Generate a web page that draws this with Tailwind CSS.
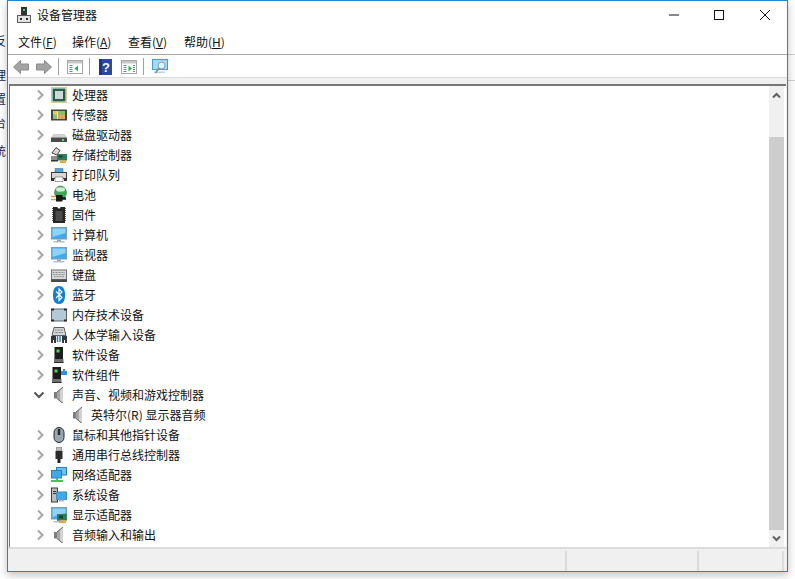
<!DOCTYPE html>
<html lang="zh-CN">
  <head>
    <meta charset="UTF-8" />
    <script src="https://cdn.jsdelivr.net/npm/@tailwindcss/browser@4"></script>
    <title>设备管理器</title>
  </head>
  <body class="bg-white font-['Noto_Sans_CJK_SC','Noto_Sans',sans-serif] text-[12px] text-[#111]">
    <svg class="hidden">
      <symbol id="speaker" viewBox="0 0 16 16">
        <path d="M3 5h3.500v6.500H3z" fill="#7d7d7d" />
        <path d="M6 5 12 0v16.500L6 11.500z" fill="#a6a6a6" />
        <path d="M9 2.500 12 0v16.500L9 14z" fill="#d2d2d2" />
        <path d="M6 5 12 0M6 11.500l6 5" stroke="#666" fill="none" />
      </symbol>
      <symbol id="monitor" viewBox="0 0 16 16">
        <rect x=".5" y=".5" width="15" height="11.500" fill="#3fa9ee" stroke="#7f9db3" />
        <path d="M1.500 1.500h13v4.500L1.500 10z" fill="#8fd3f9" />
        <path d="M6 12.500h4v1.500H6z" fill="#98a6b0" />
        <path d="M2.500 14h11v1.500h-11z" fill="#b3bec6" />
      </symbol>
      <symbol id="tower" viewBox="0 0 16 16">
        <rect x="3.500" y="0" width="8.500" height="12" fill="#1c1c1c" />
        <rect x="5.500" y="2.500" width="3" height="3" fill="#3fe04f" />
        <path d="M3 12h9.500v4H3z" fill="#707070" />
        <path d="M3 15h9.500v1H3z" fill="#2c2c2c" />
      </symbol>
      <symbol id="chevron" viewBox="0 0 10 12">
        <path d="M3 1.500 7.500 6 3 10.500" fill="none" stroke="#a6a6a6" stroke-width="2" />
      </symbol>
      <symbol id="window" viewBox="0 0 16 14">
        <rect x=".5" y=".5" width="15" height="13" fill="#fff" stroke="#a6a6a6" />
        <path d="M1 1h14v2.500H1z" fill="#c6c6c6" />
        <path d="M2.500 5.500h3M2.500 7.500h3M2.500 9.500h3M2.500 11.500h3" stroke="#5d87a8" />
      </symbol>
    </svg>

    <div class="flex w-[795px] h-[579px] overflow-hidden">
      <!-- what shows of the window behind -->
      <div class="relative w-[7px] h-full overflow-hidden text-[#1b2a56]">
        <span class="absolute right-px top-[32px]">反</span>
        <span class="absolute right-px top-[66px]">理</span>
        <span class="absolute right-px top-[90px]">置</span>
        <span class="absolute right-px top-[114px]">台</span>
        <span class="absolute right-px top-[142px]">统</span>
      </div>

      <!-- device manager window -->
      <div class="flex flex-col w-[781px] h-[572px] border border-[#1a86d8] bg-white shadow-[0_3px_8px_rgba(0,0,0,0.25)] z-10">
        <!-- title bar -->
        <div class="flex items-center h-[29px] shrink-0 pb-[2px]">
          <svg class="ml-[9px] w-[14px] h-[16px]" viewBox="0 0 14 16">
            <path d="M4 0h6v8H4z" fill="#333" />
            <path d="M6 2h2v2H6z" fill="#46d35a" />
            <rect x=".5" y="8.500" width="13" height="7" fill="#e2e2e2" stroke="#5c5c5c" />
            <path d="M3 11h2v2H3zM9 11h2v2H9z" fill="#333" />
          </svg>
          <span class="ml-[6px]">设备管理器</span>
          <div class="flex items-center ml-auto">
            <svg class="w-[10px] h-[10px] mr-[35px]" viewBox="0 0 10 10"><path d="M0 5h10" stroke="#111" /></svg>
            <svg class="w-[10px] h-[10px] mr-[36px]" viewBox="0 0 10 10"><rect x=".5" y=".5" width="9" height="9" fill="none" stroke="#111" /></svg>
            <svg class="w-[10px] h-[10px] mr-[17px]" viewBox="0 0 10 10"><path d="M0 0l10 10M10 0 0 10" stroke="#111" /></svg>
          </div>
        </div>

        <!-- menu -->
        <div class="flex items-center h-[25px] shrink-0 border-b border-[#a9a9a9] pl-[10px]">
          <span class="w-[54px]">文件(<span class="underline">F</span>)</span>
          <span class="w-[56px]">操作(<span class="underline">A</span>)</span>
          <span class="w-[56px]">查看(<span class="underline">V</span>)</span>
          <span>帮助(<span class="underline">H</span>)</span>
        </div>

        <!-- toolbar -->
        <div class="flex items-center h-[22px] shrink-0 pl-[5px] pt-px">
          <svg class="w-[16px] h-[14px]" viewBox="0 0 16 14"><path d="M7.500 .5v3.500h8v6h-8v3.500L.5 7z" fill="#a3a3a3" stroke="#8a8a8a" /></svg>
          <svg class="w-[16px] h-[14px] ml-[7px]" viewBox="0 0 16 14"><path d="M8.500 .5v3.500h-8v6h8v3.500L15.500 7z" fill="#a3a3a3" stroke="#8a8a8a" /></svg>
          <div class="w-px h-[17px] bg-[#a0a0a0] ml-[6px]"></div>
          <svg class="w-[16px] h-[14px] ml-[8px]" viewBox="0 0 16 14">
            <use href="#window" />
            <path d="M11 5.500v6L7.500 8.500z" fill="#28b33c" />
          </svg>
          <div class="w-px h-[17px] bg-[#a0a0a0] ml-[6px]"></div>
          <svg class="w-[13px] h-[16px] ml-[9px]" viewBox="0 0 13 16">
            <rect width="13" height="16" fill="#2a4aa8" />
            <path d="M0 0h3v16H0z" fill="#1c3585" />
            <text x="7" y="13" text-anchor="middle" font-size="13" font-weight="700" fill="#fff" font-family="Liberation Sans">?</text>
          </svg>
          <svg class="w-[16px] h-[14px] ml-[9px]" viewBox="0 0 16 14">
            <use href="#window" />
            <path d="M7.500 5.500v6l3.500-3z" fill="#28b33c" />
            <path d="M12 5.500h2M12 7.500h2M12 9.500h2M12 11.500h2" stroke="#5d87a8" />
          </svg>
          <div class="w-px h-[17px] bg-[#a0a0a0] ml-[6px]"></div>
          <svg class="w-[16px] h-[16px] ml-[8px]" viewBox="0 0 16 16">
            <rect x=".5" y=".5" width="15" height="10" fill="#9fdcf8" stroke="#3f9ed6" />
            <path d="M2 12.500h11v1.500H2z" fill="#b7d4e3" />
            <circle cx="9.500" cy="6.500" r="3.500" fill="#e3f5fd" stroke="#8a9aa3" />
            <path d="M7 9 3.500 14" stroke="#8a8a8a" stroke-width="1.500" />
          </svg>
        </div>

        <div class="h-[7px] shrink-0 bg-[#f0f0f0] border-t border-[#dcdcdc]"></div>

        <!-- tree + scrollbar -->
        <div class="flex h-[463px] shrink-0 bg-[#f0f0f0] pr-[1px]">
          <div class="flex flex-1 bg-white border-t-2 border-l border-[#777] ml-px">
            <div class="flex-1 -mt-px">
              <div class="flex items-center h-5 pl-[25px]">
                <svg class="w-[10px] h-[12px]"><use href="#chevron" /></svg>
                <svg class="w-[16px] h-[16px] ml-[6px]" viewBox="0 0 16 16">
                  <rect x=".5" y=".5" width="15" height="15" fill="none" stroke="#b0912c" stroke-dasharray="1 1" />
                  <rect x="1.500" y="1.500" width="13" height="13" fill="#22604a" />
                  <rect x="4" y="4" width="8" height="8" fill="#d2d8d5" />
                </svg>
                <span class="ml-[5px]">处理器</span>
              </div>
              <div class="flex items-center h-5 pl-[25px]">
                <svg class="w-[10px] h-[12px]"><use href="#chevron" /></svg>
                <svg class="w-[16px] h-[16px] ml-[6px]" viewBox="0 0 16 16">
                  <rect y="2.500" width="16" height="11" fill="#3e4a40" />
                  <rect x="2" y="4" width="12" height="8" fill="#8fbf6c" />
                  <path d="M2 4h4v3.500H2z" fill="#e8c95a" />
                  <path d="M7 8h7v4H7z" fill="#e6a35a" />
                  <path d="M6 4h1v8H6z" fill="#f1e7b0" />
                </svg>
                <span class="ml-[5px]">传感器</span>
              </div>
              <div class="flex items-center h-5 pl-[25px]">
                <svg class="w-[10px] h-[12px]"><use href="#chevron" /></svg>
                <svg class="w-[16px] h-[16px] ml-[6px]" viewBox="0 0 16 16">
                  <path d="M2.500 7h11L16 10.500H0z" fill="#d0d0d0" />
                  <rect y="10.500" width="16" height="4.500" fill="#4a4a4a" />
                  <rect x="11" y="12" width="2" height="2" fill="#4fe05f" />
                </svg>
                <span class="ml-[5px]">磁盘驱动器</span>
              </div>
              <div class="flex items-center h-5 pl-[25px]">
                <svg class="w-[10px] h-[12px]"><use href="#chevron" /></svg>
                <svg class="w-[16px] h-[16px] ml-[6px]" viewBox="0 0 16 16">
                  <path d="M1 6 5 .5l4 3L6 8z" fill="#d8d8d8" stroke="#444" />
                  <path d="M0 9h7v4H0z" fill="#8e8e8e" />
                  <path d="M0 13h7v1.500H0z" fill="#333" />
                  <rect x="6" y="7" width="10" height="6.500" fill="#2f7d5a" />
                  <path d="M9 13.500h6V16H9z" fill="#e2a93b" />
                  <path d="M7.500 8.500h4v2h-4z" fill="#16452f" />
                </svg>
                <span class="ml-[5px]">存储控制器</span>
              </div>
              <div class="flex items-center h-5 pl-[25px]">
                <svg class="w-[10px] h-[12px]"><use href="#chevron" /></svg>
                <svg class="w-[16px] h-[16px] ml-[6px]" viewBox="0 0 16 16">
                  <path d="M4 1.500h8v4H4z" fill="#4aa8e4" stroke="#2e5f84" stroke-width=".5" />
                  <rect x=".5" y="5.500" width="15" height="6" fill="#d8d8d8" stroke="#3d3d3d" />
                  <path d="M0 11h3v3h10v-3h3v3H0z" fill="#333" />
                  <path d="M4 10h8v4.500H4z" fill="#fff" stroke="#444" stroke-width=".5" />
                </svg>
                <span class="ml-[5px]">打印队列</span>
              </div>
              <div class="flex items-center h-5 pl-[25px]">
                <svg class="w-[10px] h-[12px]"><use href="#chevron" /></svg>
                <svg class="w-[16px] h-[16px] ml-[6px] overflow-visible" viewBox="0 0 16 16">
                  <ellipse cx="9.500" cy="5.500" rx="6" ry="6.500" fill="#3fa851" stroke="#2b5f35" stroke-width=".5" />
                  <ellipse cx="9.500" cy="2.500" rx="4.500" ry="2.200" fill="#cfeed3" />
                  <path d="M5 8h6.500v6.500H5z" fill="#161616" />
                  <path d="M0 9.500h5M0 12.500h5" stroke="#c9a63c" stroke-width="1.500" />
                  <path d="M11 11.500h4" stroke="#161616" stroke-width="2.500" />
                </svg>
                <span class="ml-[5px]">电池</span>
              </div>
              <div class="flex items-center h-5 pl-[25px]">
                <svg class="w-[10px] h-[12px]"><use href="#chevron" /></svg>
                <svg class="w-[16px] h-[16px] ml-[6px]" viewBox="0 0 16 16">
                  <path d="M2 0h4.500a1.500 1.500 0 0 0 3 0H14v16H2z" fill="#262626" />
                  <path d="M4.500 4h7v10h-7z" fill="#4d4d4d" />
                  <path d="M1.500 1v14M14.500 1v14" stroke="#666" stroke-dasharray="1 1" />
                </svg>
                <span class="ml-[5px]">固件</span>
              </div>
              <div class="flex items-center h-5 pl-[25px]">
                <svg class="w-[10px] h-[12px]"><use href="#chevron" /></svg>
                <svg class="w-[16px] h-[16px] ml-[6px]"><use href="#monitor" /></svg>
                <span class="ml-[5px]">计算机</span>
              </div>
              <div class="flex items-center h-5 pl-[25px]">
                <svg class="w-[10px] h-[12px]"><use href="#chevron" /></svg>
                <svg class="w-[16px] h-[16px] ml-[6px]"><use href="#monitor" /></svg>
                <span class="ml-[5px]">监视器</span>
              </div>
              <div class="flex items-center h-5 pl-[25px]">
                <svg class="w-[10px] h-[12px]"><use href="#chevron" /></svg>
                <svg class="w-[16px] h-[16px] ml-[6px]" viewBox="0 0 16 16">
                  <rect x=".5" y="3" width="15" height="9.500" fill="#d4d7da" stroke="#6f6f6f" />
                  <path d="M2 5.500h12M2 7.500h12M3 9.500h10" stroke="#8a8a8a" stroke-dasharray="1 .5" />
                  <path d="M0 12.500h16V15H0z" fill="#4a4a4a" />
                </svg>
                <span class="ml-[5px]">键盘</span>
              </div>
              <div class="flex items-center h-5 pl-[25px]">
                <svg class="w-[10px] h-[12px]"><use href="#chevron" /></svg>
                <svg class="w-[16px] h-[18px] ml-[6px]" viewBox="0 0 16 18">
                  <path d="M8 0c4 0 6 3 6 9s-2 9-6 9-6-3-6-9 2-9 6-9z" fill="#0a7de0" />
                  <path d="M5 5.500 11 11.500 8 14.500V3l3 3-6 6" fill="none" stroke="#fff" stroke-width="1.200" />
                </svg>
                <span class="ml-[5px]">蓝牙</span>
              </div>
              <div class="flex items-center h-5 pl-[25px]">
                <svg class="w-[10px] h-[12px]"><use href="#chevron" /></svg>
                <svg class="w-[16px] h-[16px] ml-[6px]" viewBox="0 0 16 16">
                  <rect x=".5" y="2" width="15" height="12" rx="2" fill="#b4c9d8" stroke="#566570" />
                  <path d="M0 1.500h3v2H0zM13 1.500h3v2h-3zM0 12.500h3v2H0zM13 12.500h3v2h-3z" fill="#2c2c2c" />
                </svg>
                <span class="ml-[5px]">内存技术设备</span>
              </div>
              <div class="flex items-center h-5 pl-[25px]">
                <svg class="w-[10px] h-[12px]"><use href="#chevron" /></svg>
                <svg class="w-[16px] h-[16px] ml-[6px]" viewBox="0 0 16 16">
                  <path d="M3 .5h10l2 8H1z" fill="#d2d5d8" stroke="#5c5c5c" />
                  <path d="M4 3h8M3.500 5.500h9" stroke="#7d7d7d" stroke-dasharray="1 .5" />
                  <path d="M0 9h5v7H3v-3H2v3H0z" fill="#33373c" />
                  <path d="M11 9h5v7h-2v-3h-1v3h-2z" fill="#33373c" />
                  <path d="M6.500 8v7M9 8v7" stroke="#3f78ad" stroke-width="1.500" />
                </svg>
                <span class="ml-[5px]">人体学输入设备</span>
              </div>
              <div class="flex items-center h-5 pl-[25px]">
                <svg class="w-[10px] h-[12px]"><use href="#chevron" /></svg>
                <svg class="w-[16px] h-[16px] ml-[6px]"><use href="#tower" /></svg>
                <span class="ml-[5px]">软件设备</span>
              </div>
              <div class="flex items-center h-5 pl-[25px]">
                <svg class="w-[10px] h-[12px]"><use href="#chevron" /></svg>
                <svg class="w-[16px] h-[16px] ml-[6px]" viewBox="0 0 16 16">
                  <use href="#tower" width="16" height="16" x="-2" />
                  <path d="M10 4h2V2h2v2h2v4h-6z" fill="#2f8fe0" />
                </svg>
                <span class="ml-[5px]">软件组件</span>
              </div>
              <div class="flex items-center h-5 pl-[23px]">
                <svg class="w-[12px] h-[12px]" viewBox="0 0 12 12"><path d="M1.500 3.500 6 8l4.500-4.500" fill="none" stroke="#555" stroke-width="2" /></svg>
                <svg class="w-[16px] h-[16px] ml-[6px]"><use href="#speaker" /></svg>
                <span class="ml-[5px]">声音、视频和游戏控制器</span>
              </div>
              <div class="flex items-center h-5 pl-[60px]">
                <svg class="w-[16px] h-[16px]"><use href="#speaker" /></svg>
                <span class="ml-[5px]">英特尔(R) 显示器音频</span>
              </div>
              <div class="flex items-center h-5 pl-[25px]">
                <svg class="w-[10px] h-[12px]"><use href="#chevron" /></svg>
                <svg class="w-[16px] h-[16px] ml-[6px]" viewBox="0 0 16 16">
                  <rect x="3" y=".5" width="10" height="15" rx="5" fill="#98a6b1" stroke="#2b2b2b" />
                  <path d="M8 2v6" stroke="#2b2b2b" stroke-width="2.500" />
                </svg>
                <span class="ml-[5px]">鼠标和其他指针设备</span>
              </div>
              <div class="flex items-center h-5 pl-[25px]">
                <svg class="w-[10px] h-[12px]"><use href="#chevron" /></svg>
                <svg class="w-[16px] h-[16px] ml-[6px]" viewBox="0 0 16 16">
                  <path d="M5.500 0h5v4h-5z" fill="#bdbdbd" stroke="#555" stroke-width=".5" />
                  <path d="M4.500 4h7v8h-7z" fill="#2c2c2c" />
                  <path d="M6.500 12h3v4h-3z" fill="#1f1f1f" />
                </svg>
                <span class="ml-[5px]">通用串行总线控制器</span>
              </div>
              <div class="flex items-center h-5 pl-[25px]">
                <svg class="w-[10px] h-[12px]"><use href="#chevron" /></svg>
                <svg class="w-[16px] h-[16px] ml-[6px]" viewBox="0 0 16 16">
                  <rect x="5.500" y=".5" width="10" height="7.500" fill="#6bc0f2" stroke="#2b7fb8" />
                  <rect x=".5" y="3.500" width="10" height="7.500" fill="#3fa9ee" stroke="#2b7fb8" />
                  <path d="M5 11h2v2h5v2H0v-2h5z" fill="#47c25a" />
                </svg>
                <span class="ml-[5px]">网络适配器</span>
              </div>
              <div class="flex items-center h-5 pl-[25px]">
                <svg class="w-[10px] h-[12px]"><use href="#chevron" /></svg>
                <svg class="w-[16px] h-[16px] ml-[6px]" viewBox="0 0 16 16">
                  <rect x=".5" y="1" width="6" height="14" fill="#bdbdbd" stroke="#3d3d3d" />
                  <path d="M2 4h3v1H2zM2 6h3v1H2z" fill="#333" />
                  <rect x="5.500" y="5" width="10" height="7.500" fill="#3fa9ee" stroke="#3a8fc4" />
                  <path d="M8 12.500h5v2H8z" fill="#a9b5bd" />
                </svg>
                <span class="ml-[5px]">系统设备</span>
              </div>
              <div class="flex items-center h-5 pl-[25px]">
                <svg class="w-[10px] h-[12px]"><use href="#chevron" /></svg>
                <svg class="w-[16px] h-[16px] ml-[6px]" viewBox="0 0 16 16">
                  <use href="#monitor" width="16" height="16" />
                  <rect x="6" y="7" width="10" height="6.500" fill="#2f7d5a" />
                  <path d="M8 13.500h7V16H8z" fill="#e2a93b" />
                  <path d="M8 8.500h4v3H8z" fill="#16452f" />
                </svg>
                <span class="ml-[5px]">显示适配器</span>
              </div>
              <div class="flex items-center h-5 pl-[25px]">
                <svg class="w-[10px] h-[12px]"><use href="#chevron" /></svg>
                <svg class="w-[16px] h-[16px] ml-[6px]"><use href="#speaker" /></svg>
                <span class="ml-[5px]">音频输入和输出</span>
              </div>
            </div>

            <!-- scrollbar -->
            <div class="flex flex-col w-[15px] mr-[2px] bg-[#f0f0f0] shrink-0">
              <div class="flex items-center justify-center h-[51px] pb-[32px] shrink-0">
                <svg class="w-[9px] h-[7px]" viewBox="0 0 9 7"><path d="M1 5.500 4.500 2 8 5.500" fill="none" stroke="#606060" stroke-width="2" /></svg>
              </div>
              <div class="h-[393px] shrink-0 bg-[#cdcdcd]"></div>
              <div class="flex flex-1 items-center justify-center">
                <svg class="w-[9px] h-[7px]" viewBox="0 0 9 7"><path d="M1 1.500 4.500 5 8 1.500" fill="none" stroke="#606060" stroke-width="2" /></svg>
              </div>
            </div>
          </div>
        </div>

        <!-- status bar -->
        <div class="flex flex-1 bg-[#f0f0f0] border-t-2 border-[#dcdcdc] pt-[2px]">
          <div class="w-[559px] border-r-2 border-[#dcdcdc]"></div>
          <div class="w-[132px] border-r-2 border-[#dcdcdc]"></div>
          <div class="w-[85px] border-r-2 border-[#dcdcdc]"></div>
        </div>
      </div>

      <!-- right of the window -->
      <div class="flex-1 flex flex-col">
        <div class="h-[55px] border-b border-[#d0d0d0]"></div>
        <div class="h-[26px] border-b border-[#d0d0d0]"></div>
      </div>
    </div>
  </body>
</html>
